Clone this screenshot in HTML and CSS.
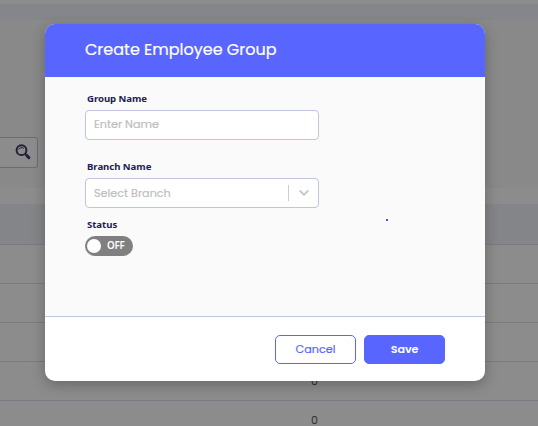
FILE: index.html
```html
<!DOCTYPE html>
<html lang="en">
<head>
<meta charset="utf-8">
<title>Create Employee Group</title>
<link rel="stylesheet" href="styles.css">
</head>
<body>
<main class="page">
  <div class="topbar"></div>
  <section class="filters">
    <div class="search">
      <svg width="16" height="16" viewBox="0 0 16 16" fill="none" stroke="#403a68" stroke-linecap="round"><circle cx="6.5" cy="6.2" r="4.9" stroke-width="2"/><path d="M3.8 5.2a3 3 0 0 1 4.8-1" stroke-width="1"/><path d="M10.3 10l1 1" stroke-width="1.7"/><path d="M11.5 11.2l2.4 2.4" stroke-width="2.9"/></svg>
    </div>
  </section>
  <div class="table-head"></div>
  <div class="row"></div>
  <div class="row"></div>
  <div class="row"></div>
  <div class="row"><span class="count">0</span></div>
  <div class="row last"><span class="count">0</span></div>
</main>
<div class="overlay">
  <form class="modal">
    <header class="modal-head"><h1 class="title">Create Employee Group</h1></header>
    <div class="modal-body">
      <label class="label">Group Name</label>
      <div class="field"><span class="placeholder">Enter Name</span></div>
      <label class="label label-branch">Branch Name</label>
      <div class="field">
        <span class="placeholder select">Select Branch</span>
        <span class="separator"></span>
        <svg class="chevron" width="10" height="6" viewBox="0 0 10 6" fill="none" stroke="#c8c8c8" stroke-width="1.9" stroke-linecap="round" stroke-linejoin="round"><path d="M1.2 1l3.8 3.8L8.8 1"/></svg>
      </div>
      <label class="label label-status">Status</label>
      <div class="toggle"><span class="knob"></span><span class="state">OFF</span></div>
      <span class="dot"></span>
    </div>
    <footer class="modal-foot">
      <button type="button" class="btn cancel">Cancel</button>
      <button type="button" class="btn save">Save</button>
    </footer>
  </form>
</div>
</body>
</html>
```
FILE: styles.css
```css
* { box-sizing: border-box; }
body {
  margin: 0;
  height: 426px;
  overflow: hidden;
  background: #fff;
  font-family: Poppins, Inter, "Liberation Sans", sans-serif;
}
.page { padding-top: 4px; height: 426px; }
.topbar { height: 16px; background: #f2f4fa; }
.filters {
  height: 168px;
  margin-bottom: 16px;
  padding-top: 117px;
  background: #fafafa;
}
.search {
  display: flex;
  justify-content: flex-end;
  width: 38px;
  height: 31px;
  padding: 6px 6px 0 0;
  border: 1px solid #c1c5df;
  border-left: 0;
  border-radius: 0 3px 3px 0;
  background: #fff;
}
.table-head { height: 41px; background: #f0f2fa; border-bottom: 1px solid #dfe1e6; }
.row {
  display: flex;
  align-items: center;
  height: 39px;
  padding-left: 311px;
  border-bottom: 1px solid #dbe0ef;
}
.row.last { height: 25px; padding-top: 13px; border: 0; }
.count { font-size: 11px; line-height: 12px; color: #555; }

.overlay {
  position: absolute;
  inset: 0;
  padding: 24px 45px;
  overflow: hidden;
  background: rgba(0, 0, 0, .45);
}
.modal {
  width: 440px;
  height: 357px;
  display: flex;
  flex-direction: column;
  border-radius: 10px;
  overflow: hidden;
  background: #fff;
  box-shadow: 0 4px 14px rgba(0, 0, 0, .26);
}
.modal-head {
  display: flex;
  align-items: center;
  height: 53px;
  padding: 0 40px 2px;
  background: #5965ff;
}
.title { margin: 0; font-size: 16px; font-weight: 400; color: #fff; white-space: nowrap; -webkit-text-stroke: .2px #fff; }
.modal-body {
  position: relative;
  height: 240px;
  padding: 13px 40px 0;
  background: #fafafa;
  border-bottom: 1px solid #bdc5e2;
}
.label {
  display: block;
  height: 20px;
  padding-left: 2px;
  font: 700 9.6px/18px "Noto Sans", sans-serif;
  letter-spacing: -.04px;
  color: #211b56;
}
.label-branch { margin-top: 18px; }
.label-status { margin-top: 8px; }
.field {
  display: flex;
  align-items: center;
  width: 234px;
  height: 30px;
  padding: 0 9px 0 8px;
  border: 1px solid #bdc5df;
  border-radius: 4px;
  background: #fff;
}
.placeholder { font-size: 11.2px; line-height: 16px; color: #bebebe; padding-bottom: 2px; -webkit-text-stroke: .2px #bebebe; }
.placeholder.select { padding-bottom: 1px; }
.separator { width: 1px; height: 16px; margin-left: auto; margin-right: 10px; background: #ccc; }
.toggle {
  display: flex;
  align-items: center;
  width: 48px;
  height: 20px;
  padding-left: 2px;
  border-radius: 10px;
  background: #808080;
}
.knob { width: 14px; height: 14px; border-radius: 50%; background: #fff; }
.state { margin-left: 6px; font: 600 9.8px/12px "Noto Sans", sans-serif; letter-spacing: -.2px; color: #fff; }
.dot { position: absolute; left: 341px; top: 142px; width: 2px; height: 2px; border-radius: 1px; background: #1414e0; }
.modal-foot { display: flex; gap: 8px; padding: 18px 40px 0; justify-content: flex-end; }
.btn {
  width: 81px;
  height: 29px;
  padding: 0;
  border: 1px solid #5965ff;
  border-radius: 5px;
  font: 400 11.2px/27px Poppins, Inter, sans-serif;
}
.cancel { color: #5965ff; background: #fff; -webkit-text-stroke: .2px #5965ff; }
.save { color: #fff; background: #5965ff; font-weight: 600; letter-spacing: -.1px; }
```
